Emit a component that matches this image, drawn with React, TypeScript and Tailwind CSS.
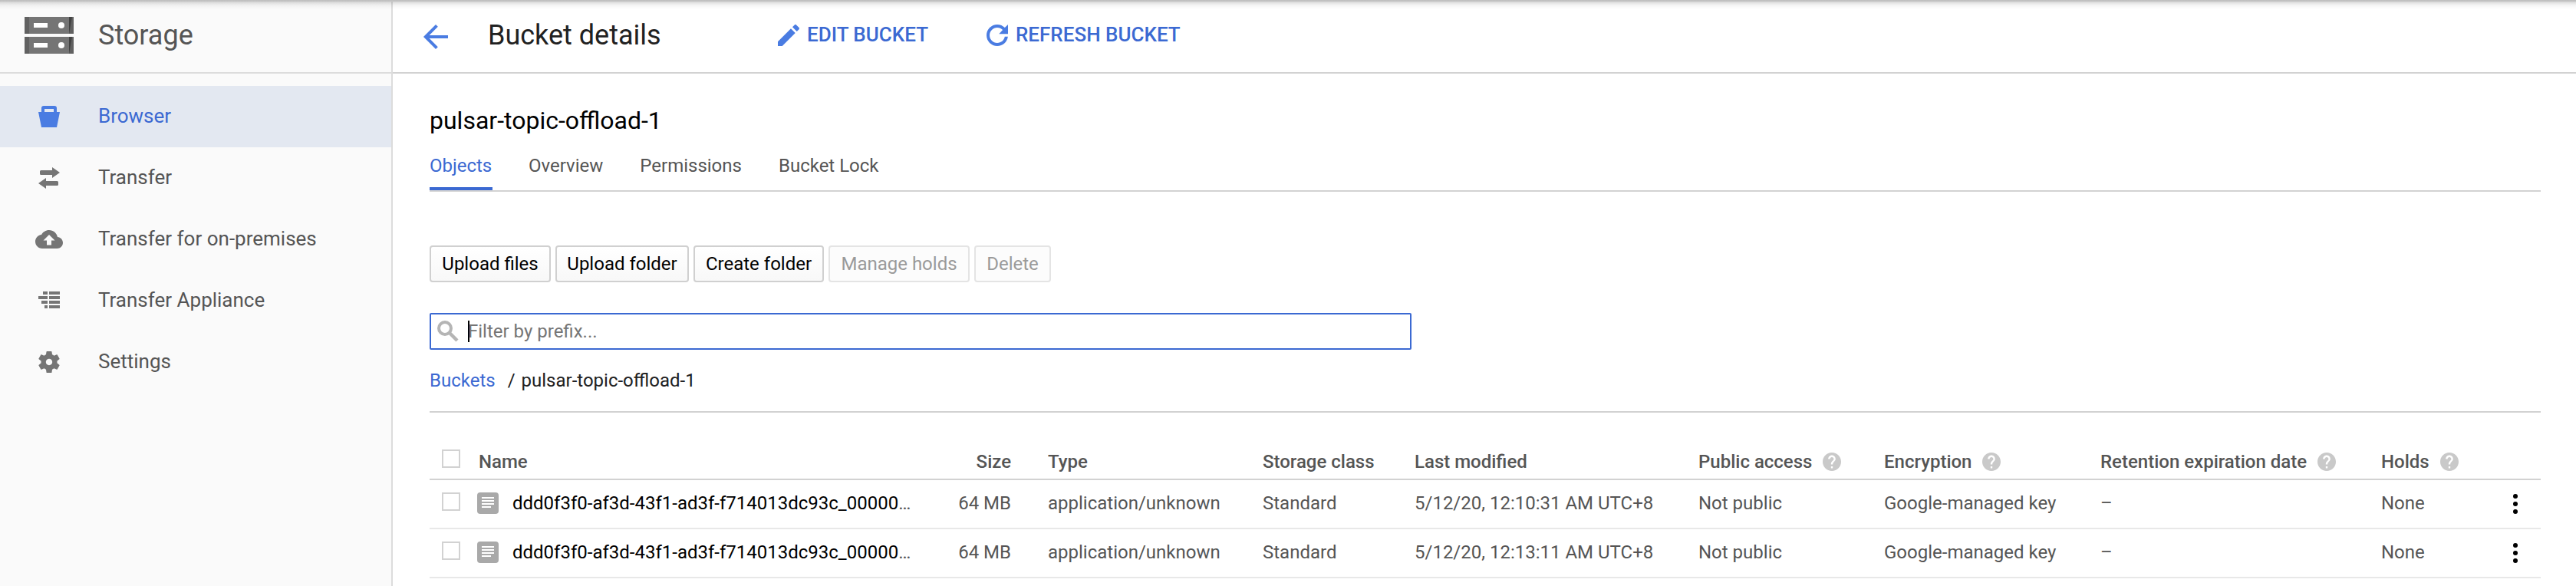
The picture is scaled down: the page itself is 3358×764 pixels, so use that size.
import React from "react";

type IconProps = { className?: string };

const StorageLogo = ({ className = "" }: IconProps) => (
  <svg viewBox="0 0 64 48" className={className}>
    {[0, 26].map((y) => (
      <g key={y} transform={`translate(0 ${y})`}>
        <rect width="64" height="22" fill="#757575" />
        <rect width="6" height="22" fill="#616161" />
        <rect x="58" width="6" height="22" fill="#616161" />
        <path d="M58 0h4L58 22z" fill="#424242" />
        <rect x="12" y="8" width="18" height="6" fill="#fff" />
        <circle cx="48" cy="11" r="4" fill="#fff" />
      </g>
    ))}
  </svg>
);

const BucketIcon = ({ className = "" }: IconProps) => (
  <svg viewBox="0 0 28 28" fill="currentColor" className={className}>
    <path
      fillRule="evenodd"
      d="M4 8V3a3 3 0 0 1 3-3h14a3 3 0 0 1 3 3v5h4l-4 20H4L0 8zM8 4v4h12V4z"
    />
  </svg>
);

const TransferIcon = ({ className = "" }: IconProps) => (
  <svg viewBox="0 0 28 28" fill="currentColor" className={className}>
    <path d="M3.500 4H18V0l10 7-10 7v-4H3.500A1.500 1.500 0 0 1 2 8.500v-3A1.500 1.500 0 0 1 3.500 4z" />
    <path d="M24.500 18H10v-4L0 21l10 7v-4h14.500a1.500 1.500 0 0 0 1.500-1.500v-3a1.500 1.500 0 0 0-1.500-1.500z" />
  </svg>
);

const CloudUploadIcon = ({ className = "" }: IconProps) => (
  <svg viewBox="0 4 24 16" preserveAspectRatio="none" fill="currentColor" className={className}>
    <path d="M19.350 10.040C18.670 6.590 15.640 4 12 4 9.110 4 6.600 5.640 5.350 8.040 2.340 8.360 0 10.910 0 14c0 3.310 2.690 6 6 6h13c2.760 0 5-2.240 5-5 0-2.640-2.050-4.780-4.650-4.960zM14 13v4h-4v-4H7l5-5 5 5h-3z" />
  </svg>
);

const ApplianceIcon = ({ className = "" }: IconProps) => (
  <svg viewBox="0 0 28 22" fill="currentColor" className={className}>
    <path d="M6 0h6v4H6zM14 0h14v4H14zM0 6h12v4H0zM14 6h14v4H14zM4 12h8v4H4zM14 12h14v4H14zM8 18h4v4H8zM14 18h14v4H14z" />
  </svg>
);

const GearIcon = ({ className = "" }: IconProps) => (
  <svg viewBox="2.250 2 19.500 20" fill="currentColor" className={className}>
    <path d="M19.430 12.980c.04-.32.07-.64.07-.98s-.03-.66-.07-.98l2.110-1.650c.19-.15.24-.42.12-.64l-2-3.460c-.12-.22-.39-.3-.61-.22l-2.490 1c-.52-.4-1.080-.73-1.690-.98l-.38-2.650C14.460 2.180 14.250 2 14 2h-4c-.25 0-.46.18-.49.42l-.38 2.650c-.61.25-1.170.59-1.690.98l-2.490-1c-.23-.09-.49 0-.61.22l-2 3.460c-.13.22-.07.49.12.64l2.110 1.650c-.04.32-.07.65-.07.98s.03.66.07.98l-2.110 1.650c-.19.15-.24.42-.12.64l2 3.460c.12.22.39.3.61.22l2.490-1c.52.4 1.080.73 1.690.98l.38 2.650c.03.24.24.42.49.42h4c.25 0 .46-.18.49-.42l.38-2.650c.61-.25 1.170-.59 1.690-.98l2.490 1c.23.09.49 0 .61-.22l2-3.460c.12-.22.07-.49-.12-.64l-2.110-1.650zM12 15c-1.650 0-3-1.350-3-3s1.350-3 3-3 3 1.350 3 3-1.350 3-3 3z" />
  </svg>
);

const BackIcon = ({ className = "" }: IconProps) => (
  <svg viewBox="0 0 24 24" fill="currentColor" className={className}>
    <path d="M20 11H7.830l5.590-5.590L12 4l-8 8 8 8 1.410-1.410L7.830 13H20v-2z" />
  </svg>
);

const EditIcon = ({ className = "" }: IconProps) => (
  <svg viewBox="0 0 18 18" fill="currentColor" className={className}>
    <path d="M2 13.120l8.490-8.488 2.878 2.878L4.878 16H2v-2.880zm13.776-8.017L14.370 6.507 11.494 3.630l1.404-1.406c.3-.3.783-.3 1.083 0l1.800 1.796c.3.3.3.784 0 1.084z" />
  </svg>
);

const RefreshIcon = ({ className = "" }: IconProps) => (
  <svg viewBox="4 4 16 16" fill="currentColor" className={className}>
    <path d="M17.650 6.350C16.200 4.900 14.210 4 12 4c-4.420 0-7.990 3.580-7.990 8s3.570 8 7.990 8c4.080 0 7.450-3.050 7.930-7h-2.330c-.47 2.700-2.770 4.700-5.600 4.700-3.150 0-5.700-2.550-5.700-5.700s2.550-5.700 5.700-5.700c1.580 0 3 .64 4.030 1.670L13.300 11H20V4l-2.350 2.350z" />
  </svg>
);

const SearchIcon = ({ className = "" }: IconProps) => (
  <svg viewBox="0 0 28 28" fill="none" stroke="currentColor" className={className}>
    <circle cx="10" cy="10" r="8" strokeWidth="4" />
    <path d="M15.500 15.500l10.500 10.500" strokeWidth="4.500" />
  </svg>
);

const HelpIcon = ({ className = "" }: IconProps) => (
  <svg viewBox="2 2 20 20" fill="currentColor" className={className}>
    <path d="M12 2C6.480 2 2 6.480 2 12s4.480 10 10 10 10-4.480 10-10S17.520 2 12 2zm1 17h-2v-2h2v2zm2.070-7.750l-.9.92C13.450 12.900 13 13.500 13 15h-2v-.5c0-1.100.45-2.100 1.170-2.830l1.240-1.260c.37-.36.59-.86.59-1.410 0-1.100-.9-2-2-2s-2 .9-2 2H8c0-2.210 1.790-4 4-4s4 1.790 4 4c0 .88-.36 1.680-.93 2.250z" />
  </svg>
);

const FileIcon = ({ className = "" }: IconProps) => (
  <svg viewBox="0 0 28 28" className={className}>
    <rect width="28" height="28" rx="4" fill="#a9a9a9" />
    <path d="M6 6h16v2H6zM6 10h16v2H6zM6 14h16v2H6zM6 18h12v2H6z" fill="#fff" />
  </svg>
);

const MoreIcon = ({ className = "" }: IconProps) => (
  <svg viewBox="0 0 6 26" className={className}>
    <circle cx="3" cy="3" r="3" />
    <circle cx="3" cy="13" r="3" />
    <circle cx="3" cy="23" r="3" />
  </svg>
);

const NAV = [
  { label: "Browser", icon: <BucketIcon className="h-7 w-7" />, active: true },
  { label: "Transfer", icon: <TransferIcon className="h-7 w-7" /> },
  { label: "Transfer for on-premises", icon: <CloudUploadIcon className="h-6 w-9" /> },
  { label: "Transfer Appliance", icon: <ApplianceIcon className="mb-0.5 h-[22px] w-7" /> },
  { label: "Settings", icon: <GearIcon className="h-7 w-7" /> },
];

const TABS = ["Objects", "Overview", "Permissions", "Bucket Lock"];

const BUTTONS = [
  { label: "Upload files", width: "w-[158px]" },
  { label: "Upload folder", width: "w-[174px]" },
  { label: "Create folder", width: "w-[170px]" },
  { label: "Manage holds", width: "w-[184px]", disabled: true },
  { label: "Delete", width: "w-[100px]", disabled: true },
];

const ROWS = ["5/12/20, 12:10:31 AM UTC+8", "5/12/20, 12:13:11 AM UTC+8"];

const GRID =
  "grid grid-cols-[62px_566px_130px_48px_280px_198px_370px_242px_282px_366px_208px] text-[#555]";

const Checkbox = ({ className = "" }: IconProps) => (
  <span className={`ml-4 block h-6 w-6 border-2 border-[#d2d2d2] ${className}`} />
);

const HeaderCell = ({ label }: { label: string }) => (
  <div className="flex items-center">
    {label}
    <HelpIcon className="ml-3.5 h-6 w-6 text-[#c9c9c9]" />
  </div>
);

export default function App() {
  return (
    <div className="relative flex h-[764px] w-[3358px] overflow-hidden bg-white font-['Roboto',sans-serif] text-2xl">
      <div className="absolute inset-x-0 top-0 h-3 bg-[linear-gradient(to_bottom,#bdbdbd_0px,#c8c8c8_2px,rgba(0,0,0,0.12)_3px,rgba(0,0,0,0.04)_7px,transparent_12px)]" />

      <aside className="w-[512px] shrink-0 border-r-2 border-[#dcdcdc] bg-[#fafafa] text-[#555]">
        <div className="flex h-24 items-center border-b-2 border-[#dcdcdc] pl-8">
          <StorageLogo className="mt-[-2px] h-12 w-16" />
          <span className="ml-8 pb-[3px] text-4xl leading-[42px]">Storage</span>
        </div>
        <nav className="pt-4">
          {NAV.map((item) => (
            <div
              key={item.label}
              className={`flex h-20 items-center text-[26px] ${item.active ? "bg-[#e3e8f1] text-[#3b69d2]" : ""}`}
            >
              <span
                className={`flex w-32 justify-center ${item.active ? "text-[#4a7ce2]" : "text-[#757575]"}`}
              >
                {item.icon}
              </span>
              <span className="pb-0.5">{item.label}</span>
            </div>
          ))}
        </nav>
      </aside>

      <main className="min-w-0 flex-1">
        <header className="flex h-24 items-center border-b-2 border-[#d2d2d2] pl-8 text-[26px] font-medium text-[#3b69d2]">
          <BackIcon className="mt-0.5 h-12 w-12 text-[#4a7ce2]" />
          <h1 className="ml-11 w-[374px] pb-[3px] text-4xl leading-[42px] font-normal text-[#212121]">
            Bucket details
          </h1>
          <EditIcon className="mb-0.5 h-9 w-9 text-[#4a7ce2]" />
          <span className="ml-1.5 w-[234px] pb-1">EDIT BUCKET</span>
          <RefreshIcon className="mb-0.5 h-7 w-7 text-[#4a7ce2]" />
          <span className="ml-2.5 pb-1">REFRESH BUCKET</span>
        </header>

        <div className="pr-[46px] pl-12">
          <h2 className="pt-10 text-[32px] leading-[42px] text-black">pulsar-topic-offload-1</h2>

          <div className="mt-[22px] flex h-[50px] gap-12 border-b-2 border-[#d2d2d2] leading-8 text-[#555]">
            {TABS.map((tab, i) => (
              <span
                key={tab}
                className={
                  i === 0
                    ? "-mr-px h-12 w-[82px] border-b-4 border-[#3b69d2] text-[#3b69d2]"
                    : "h-12"
                }
              >
                {tab}
              </span>
            ))}
          </div>

          <div className="mt-[70px] flex gap-1.5">
            {BUTTONS.map((b) => (
              <button
                key={b.label}
                className={`h-12 rounded-sm border-2 leading-[42px] whitespace-nowrap ${b.width} ${
                  b.disabled
                    ? "border-[#e4e4e4] bg-[#fcfcfc] text-[#9a9a9a]"
                    : "border-[#d0d0d0] bg-linear-to-b from-white to-[#f8f8f8] text-black"
                }`}
              >
                {b.label}
              </button>
            ))}
          </div>

          <div className="mt-10 flex h-12 w-[1280px] items-center rounded-[2px] border-2 border-[#3b69d2] pl-2">
            <SearchIcon className="h-7 w-7 text-[#b5b5b5]" />
            <span className="ml-3 h-7 w-0.5 bg-black" />
            <span className="ml-[-2px] text-[#757575]">Filter by prefix...</span>
          </div>

          <div className="mt-6 flex h-8 items-center text-[#212121]">
            <span className="text-[#3b69d2]">Buckets</span>
            <span className="ml-4">/</span>
            <span className="ml-2">pulsar-topic-offload-1</span>
          </div>

          <div className="mt-6 border-t-2 border-[#d2d2d2]">
            <div
              className={`${GRID} h-[88px] border-b-2 border-[#d2d2d2] pt-12 pb-1.5 leading-7 font-medium`}
            >
              <Checkbox />
              <div className="flex items-center pl-0.5">Name</div>
              <div className="flex items-center justify-end">Size</div>
              <div />
              <div className="flex items-center">Type</div>
              <div className="flex items-center">Storage class</div>
              <div className="flex items-center">Last modified</div>
              <HeaderCell label="Public access" />
              <HeaderCell label="Encryption" />
              <HeaderCell label="Retention expiration date" />
              <HeaderCell label="Holds" />
            </div>
            {ROWS.map((modified) => (
              <div
                key={modified}
                className={`${GRID} h-16 border-b-2 border-[#e8e8e8] pt-4 leading-7 whitespace-nowrap`}
              >
                <Checkbox />
                <div className="flex">
                  <FileIcon className="h-7 w-7" />
                  <span className="ml-[18px] text-black">
                    ddd0f3f0-af3d-43f1-ad3f-f714013dc93c_00000
                  </span>
                  <span>…</span>
                </div>
                <div className="text-right">64 MB</div>
                <div />
                <div>application/unknown</div>
                <div>Standard</div>
                <div>{modified}</div>
                <div>Not public</div>
                <div>Google-managed key</div>
                <div>–</div>
                <div className="flex items-start justify-between pr-[30px]">
                  None
                  <MoreIcon className="mt-0.5 h-[26px] w-1.5" />
                </div>
              </div>
            ))}
          </div>
        </div>
      </main>
    </div>
  );
}
